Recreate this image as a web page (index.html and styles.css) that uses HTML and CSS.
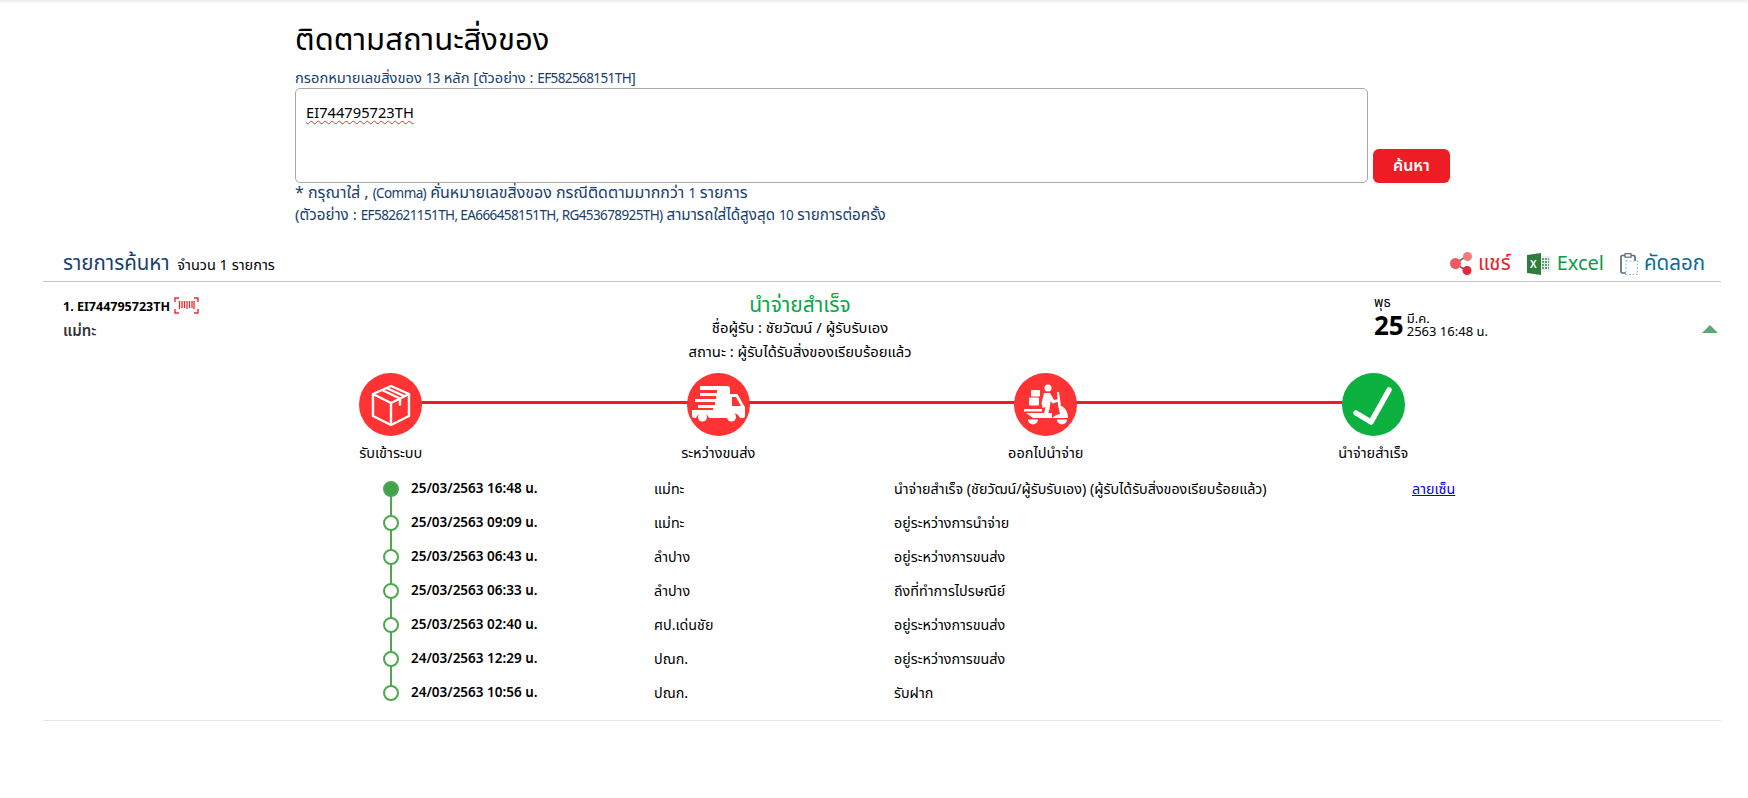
FILE: index.html
```html
<!DOCTYPE html>
<html lang="th">
<head>
<meta charset="utf-8">
<title>ติดตามสถานะสิ่งของ</title>
<link rel="stylesheet" href="styles.css">
</head>
<body>
<div class="topshade"></div>
<section class="search">
  <h1>ติดตามสถานะสิ่งของ</h1>
  <p class="hint first">กรอกหมายเลขสิ่งของ <span class="lat">13</span> หลัก [ตัวอย่าง : <span class="lat">EF582568151TH</span>]</p>
  <div class="form">
    <div class="input"><span class="typed">EI744795723TH</span></div>
    <button class="btn">ค้นหา</button>
  </div>
  <p class="hint wide">* กรุณาใส่ , <span class="lat">(Comma)</span> คั่นหมายเลขสิ่งของ กรณีติดตามมากกว่า <span class="lat">1</span> รายการ</p>
  <p class="hint">(ตัวอย่าง : <span class="lat">EF582621151TH, EA666458151TH, RG453678925TH)</span> สามารถใส่ได้สูงสุด <span class="lat">10</span> รายการต่อครั้ง</p>
</section>
<section class="results">
  <div class="res-head">
    <div class="res-title"><span class="big">รายการค้นหา</span> <span class="count">จำนวน 1 รายการ</span></div>
    <div class="actions">
      <span class="act share"><svg width="22" height="23" viewBox="0 0 22 23"><path d="M5 11.500 17 4M5 11.500 17 19" stroke="#6b6b6b" stroke-width="1.500"/><circle cx="5.500" cy="11.500" r="5.500" fill="#ee5a5f"/><circle cx="17.500" cy="4.500" r="4.500" fill="#f47a7c"/><circle cx="17" cy="18.500" r="4.500" fill="#e5273a"/></svg>แชร์</span>
      <span class="act excel"><svg width="24" height="22" viewBox="0 0 24 22"><rect x="11" y="3" width="13" height="16" fill="#e9eef0"/><path d="M15 6h7M15 9h7M15 12h7M15 15h7" stroke="#3a8a4e" stroke-width="1.500" stroke-dasharray="2 1"/><path d="M0 2 14 0v22L0 20z" fill="#2f7d3a"/><text x="3" y="14.500" class="xl">X</text></svg>Excel</span>
      <span class="act copy"><svg width="18" height="22" viewBox="0 0 18 22"><rect x="1" y="2.500" width="14" height="17.500" rx="1.500" fill="none" stroke="#5b6b7b" stroke-width="1.700"/><rect x="5" y="0.700" width="6" height="3.500" fill="#fff" stroke="#5b6b7b" stroke-width="1.200"/><rect x="6" y="8" width="11.500" height="13.500" fill="#fff" stroke="#8ec5ee" stroke-width="1.200" stroke-dasharray="2 1.500"/></svg>คัดลอก</span>
    </div>
  </div>
  <article class="item">
    <div class="item-top">
      <div class="item-id">
        <div class="num">1. EI744795723TH <svg class="bar" width="25" height="17" viewBox="0 0 25 17"><path d="M1 5V1h4M20 1h4v4M1 12v4h4M20 16h4v-4" fill="none" stroke="#ee2a30" stroke-width="1.400"/><path d="M5.500 4v8M8 4v7M10.500 4v7M13 4v8M15.500 4v7M18 4v7M20 4v8" stroke="#ee2a30" stroke-width="1.300"/></svg></div>
        <div class="place">แม่ทะ</div>
      </div>
      <div class="item-status">
        <div class="done">นำจ่ายสำเร็จ</div>
        <div class="sub">ชื่อผู้รับ : ชัยวัฒน์ / ผู้รับรับเอง</div>
        <div class="sub">สถานะ : ผู้รับได้รับสิ่งของเรียบร้อยแล้ว</div>
      </div>
      <div class="item-date">
        <div class="day">พุธ</div>
        <div class="dt"><span class="dnum">25</span><span class="dm">มี.ค.<br>2563 16:48 น.</span></div>
      </div>
      <div class="caret"></div>
    </div>
    <div class="stages">
      <div class="stage">
        <span class="circle"><svg width="42" height="44" viewBox="0 0 42 44" fill="none" stroke="#fff" stroke-width="2.400" stroke-linejoin="round"><path d="M21 3 39 11V33L21 42 3 33V11zM3 11l18 9 18-9M21 20v22M12 7l18 8.500M16.500 5 34 13M30 15.500v7"/></svg></span>
        <span class="lab">รับเข้าระบบ</span>
      </div>
      <div class="stage">
        <span class="circle"><svg width="54" height="40" viewBox="0 0 54 40"><path fill="#fff" d="M9 1h27a3 3 0 0 1 3 3v5h6a2 2 0 0 1 2 1l5 9 2 3v9a2 2 0 0 1-2 2h-3a7 7 0 0 0-13 0H18a7 7 0 0 0-13 0H3a2 2 0 0 1-2-2v-6h21v-2H7v-3h17v-3H4v-3h21v-3H9V8h17V5H9z"/><path fill="#ff3333" d="M41 12v9h9l-5-9z"/><circle cx="11.500" cy="32" r="4.500" fill="#fff"/><circle cx="40.500" cy="32" r="4.500" fill="#fff"/></svg></span>
        <span class="lab">ระหว่างขนส่ง</span>
      </div>
      <div class="stage">
        <span class="circle"><svg width="46" height="42" viewBox="0 0 46 42" fill="#fff"><circle cx="25" cy="4" r="3.500"/><rect x="8" y="6" width="9" height="6.500" rx="1"/><rect x="6" y="13.500" width="10" height="8" rx="1"/><path d="M21 9h6l4 7 4-1 .6 2.500-6 2-2-2.500-1 8-2 6h-4l2-8-3 1-1-5z"/><path d="M34 8h2l2 14c4 1 7 6 7 12H29l4-3 4-1-2-9z"/><path d="M1 25h18v2.500H1zM3 29h26v5H10z"/><path d="M5 35.500h10a5 5 0 0 1-10 0zM34 35.500h10a5 5 0 0 1-10 0z"/></svg></span>
        <span class="lab">ออกไปนำจ่าย</span>
      </div>
      <div class="stage">
        <span class="circle ok"><svg width="44" height="44" viewBox="0 0 44 44" fill="none" stroke="#fff" stroke-width="5.500" stroke-linecap="round" stroke-linejoin="round"><path d="M5 30 20 39 38 7"/></svg></span>
        <span class="lab">นำจ่ายสำเร็จ</span>
      </div>
    </div>
    <div class="trace">
      <div class="row first"><span class="dot fill"></span><b>25/03/2563 16:48 น.</b><span>แม่ทะ</span><span>นำจ่ายสำเร็จ (ชัยวัฒน์/ผู้รับรับเอง) (ผู้รับได้รับสิ่งของเรียบร้อยแล้ว)</span><a href="#">ลายเซ็น</a></div>
      <div class="row"><span class="dot"></span><b>25/03/2563 09:09 น.</b><span>แม่ทะ</span><span>อยู่ระหว่างการนำจ่าย</span></div>
      <div class="row"><span class="dot"></span><b>25/03/2563 06:43 น.</b><span>ลำปาง</span><span>อยู่ระหว่างการขนส่ง</span></div>
      <div class="row"><span class="dot"></span><b>25/03/2563 06:33 น.</b><span>ลำปาง</span><span>ถึงที่ทำการไปรษณีย์</span></div>
      <div class="row"><span class="dot"></span><b>25/03/2563 02:40 น.</b><span>ศป.เด่นชัย</span><span>อยู่ระหว่างการขนส่ง</span></div>
      <div class="row"><span class="dot"></span><b>24/03/2563 12:29 น.</b><span>ปณก.</span><span>อยู่ระหว่างการขนส่ง</span></div>
      <div class="row last"><span class="dot"></span><b>24/03/2563 10:56 น.</b><span>ปณก.</span><span>รับฝาก</span></div>
    </div>
  </article>
</section>
</body>
</html>
```
FILE: styles.css
```css
* { box-sizing: border-box; }
html, body { margin: 0; background: #fff; }
body { font-family: "Noto Sans Thai", "Kanit", "Prompt", "Noto Sans", "Liberation Sans", sans-serif; font-size: 14px; color: #000; width: 1748px; height: 798px; overflow: hidden; }
.topshade { height: 4px; background: linear-gradient(#ececec, #fff); }
.search { margin-left: 295px; width: 1160px; }
h1 { margin: 16px 0 8px; font-size: 31px; line-height: 42px; font-weight: 400; }
.hint { margin: 0; font-size: 15.200px; color: #17406d; line-height: 21px; white-space: nowrap; }
.hint.first { font-size: 14.700px; line-height: 18px; }
.hint.wide { font-size: 16px; }
.lat { font-size: 13.500px; letter-spacing: -0.6px; }
.form { display: flex; align-items: flex-end; gap: 5px; }
.input { width: 1073px; height: 95px; border: 1px solid #a9a9a9; border-radius: 5px; padding: 15px 10px 0; font-size: 14.700px; line-height: 20px; }
.typed { text-decoration: underline wavy #e2362f 1px; text-underline-offset: 2px; }
.btn { width: 77px; height: 34px; border: 0; border-radius: 6px; background: #ee1c25; color: #fff; font: 600 16px "Noto Sans Thai", "Kanit", "Noto Sans", sans-serif; }
.results { margin: 0 27px 0 43px; }
.res-head { display: flex; justify-content: space-between; align-items: flex-end; height: 48px; margin-top: 7px; padding: 0 16px 2px 20px; border-bottom: 1px solid #c6c6c6; }
.big { font-size: 20.500px; color: #17406d; }
.count { font-size: 14.500px; margin-left: 4px; }
.actions { display: flex; gap: 16px; font-size: 20.500px; }
.act { display: inline-flex; align-items: center; gap: 6px; }
.share { color: #ee1c25; }
.excel { color: #0a9b4a; font-size: 20px; }
.copy { color: #0f6a9a; }
.xl { fill: #fff; font-size: 10px; font-weight: 700; font-family: "Liberation Sans", sans-serif; }
.item { position: relative; border-bottom: 1px solid #e8e8e8; height: 439px; }
.item-top { display: grid; grid-template-columns: 540px 394px 510px; padding: 13px 0 0 20px; height: 91px; }
.num { font-size: 12.500px; font-weight: 700; display: flex; align-items: flex-start; gap: 4px; line-height: 20px; margin-top: 3px; }
.bar { margin-top: -1px; }
.place { font-size: 15px; font-weight: 600; color: #333; margin-top: 2px; }
.item-status { text-align: center; }
.done { font-size: 21px; color: #0aa64a; line-height: 22px; }
.sub { font-size: 14.800px; line-height: 23.500px; }
.item-date { margin-left: 377px; margin-top: -1px; }
.caret { position: absolute; right: 3px; top: 43px; width: 0; height: 0; border-left: 8px solid transparent; border-right: 8px solid transparent; border-bottom: 8px solid #5aa875; }
.stages { position: relative; display: grid; grid-template-columns: repeat(4, 327.500px); margin: 0 0 0 184px; height: 99px; }
.stages::before { content: ""; position: absolute; left: 164px; width: 983px; top: 28px; height: 3px; background: #ee1c25; }
.stage { position: relative; display: flex; flex-direction: column; align-items: center; }
.circle { width: 63px; height: 63px; border-radius: 50%; background: #ff3333; display: flex; align-items: center; justify-content: center; }
.circle.ok { background: #0bb03f; }
.lab { font-size: 14.500px; line-height: 20px; margin-top: 8px; }
.day { font-size: 13.500px; line-height: 19px; }
.dt { display: flex; align-items: center; gap: 3px; }
.dnum { font-size: 26px; font-weight: 700; line-height: 28px; }
.dm { font-size: 13px; line-height: 13px; margin-top: -2px; }
.trace { padding-left: 340px; }
.row { position: relative; display: grid; grid-template-columns: 243px 240px 518px auto; height: 34px; padding-left: 28px; align-items: center; font-size: 14.300px; }
.row b { font-weight: 600; font-size: 13.500px; }
.row a { color: #00e; text-decoration: underline; }
.row::before { content: ""; position: absolute; left: 7px; top: 0; bottom: 0; width: 2px; background: #4da84d; }
.row.first::before { top: 17px; }
.row.last::before { bottom: 17px; }
.dot { position: absolute; left: 0; top: 9px; width: 16px; height: 16px; border: 2px solid #4da84d; border-radius: 50%; background: #fff; }
.dot.fill { background: #3fa34a; }
```
